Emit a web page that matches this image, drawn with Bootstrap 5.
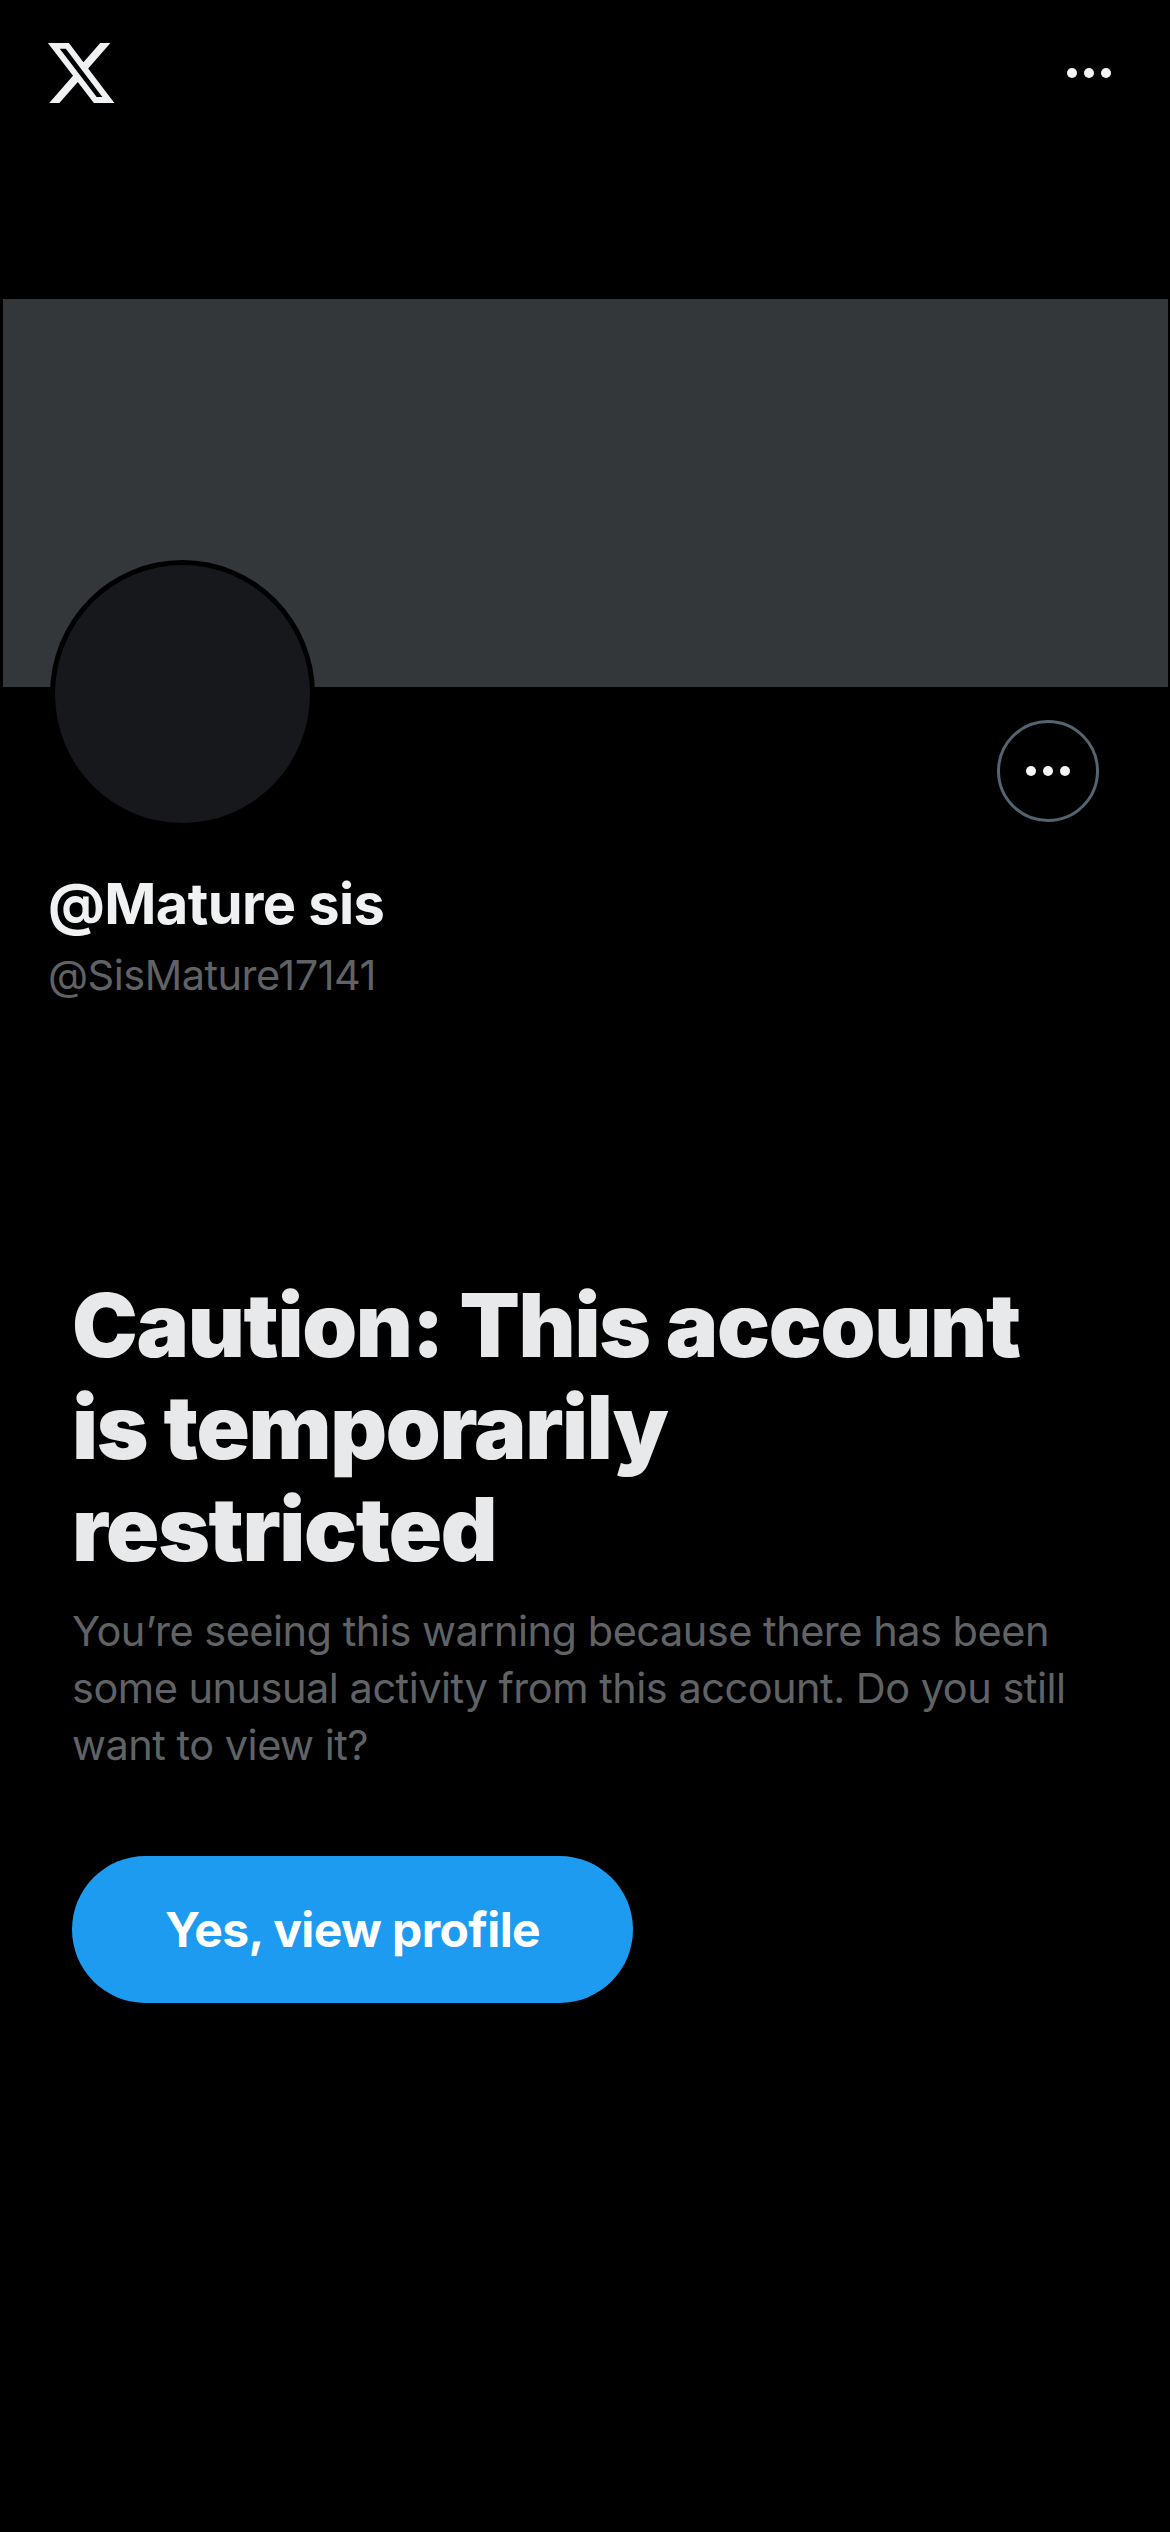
<!DOCTYPE html>
<html lang="en">
<head>
<meta charset="utf-8">
<title>Caution</title>
<link href="https://cdn.jsdelivr.net/npm/bootstrap@5.3.0/dist/css/bootstrap.min.css" rel="stylesheet">
<style>
html,body{background:#000;margin:0;}
body{font-family:Inter,"Noto Sans",sans-serif;color:#e7e9ea;height:2532px;overflow:hidden;}
.top-head{height:299px;padding:36px 59px 0 44px;}
.x-logo{width:74px;height:74px;fill:#eff1f2;display:block;}
.dots-row{display:flex;gap:7px;}
.dots-row i{display:block;width:10px;height:10px;border-radius:50%;background:#f4f5f6;}
.head-dots{margin-top:32px;}
.banner-box{height:388px;margin:0 2px 0 3px;background:#33373a;}
.profile-row{padding:0 71px 0 50px;align-items:flex-start;}
.avatar-disc{width:265px;height:268px;margin-top:-127px;border:5px solid #000;border-radius:50%;background:#17181c;position:relative;}
.more-btn{width:102px;height:102px;margin-top:33px;border:3px solid #536471;border-radius:50%;background:#000;padding:0;}
.name-line{margin:42px 0 0 48px;font-size:56px;line-height:68px;font-weight:700;color:#eff1f2;letter-spacing:-.6px;}
.handle-line{margin:11px 0 0 48px;font-size:41.5px;line-height:52px;color:#606366;letter-spacing:-.5px;}
.warn-box{margin-top:273px;padding:0 72px;}
.warn-title{font-size:88px;line-height:102px;font-weight:900;color:#e7e9ea;margin:0;letter-spacing:-1.3px;}
.warn-copy{font-size:41.5px;line-height:57px;color:#606366;margin:23px 0 0;letter-spacing:-.5px;}
.view-btn{width:561px;height:147px;margin-top:82px;border-radius:74px;border:0;background:#1d9bf0;color:#fff;font-size:48px;font-weight:700;letter-spacing:-.6px;}
.view-btn:hover,.view-btn:active{background:#1d9bf0;color:#fff;}
</style>
</head>
<body>
<header class="top-head d-flex justify-content-between align-items-start">
  <svg class="x-logo" viewBox="0 0 24 24" role="img" aria-label="X"><path d="M18.244 2.25h3.308l-7.227 8.26 8.502 11.24H16.17l-5.214-6.817L4.99 21.75H1.68l7.73-8.835L1.254 2.25H8.08l4.713 6.231zm-1.161 17.52h1.833L7.084 4.126H5.117z"/></svg>
  <div class="dots-row head-dots"><i></i><i></i><i></i></div>
</header>
<div class="banner-box"></div>
<div class="profile-row d-flex justify-content-between">
  <div class="avatar-disc"></div>
  <button class="more-btn btn d-flex align-items-center justify-content-center" type="button" aria-label="More"><span class="dots-row"><i></i><i></i><i></i></span></button>
</div>
<div class="name-line">@Mature sis</div>
<div class="handle-line">@SisMature17141</div>
<main class="warn-box">
  <h1 class="warn-title">Caution: This account<br>is temporarily<br>restricted</h1>
  <p class="warn-copy">You’re seeing this warning because there has been some unusual activity from this account. Do you still want to view it?</p>
  <button class="btn view-btn" type="button">Yes, view profile</button>
</main>
<script src="https://cdn.jsdelivr.net/npm/bootstrap@5.3.0/dist/js/bootstrap.bundle.min.js"></script>
</body>
</html>
